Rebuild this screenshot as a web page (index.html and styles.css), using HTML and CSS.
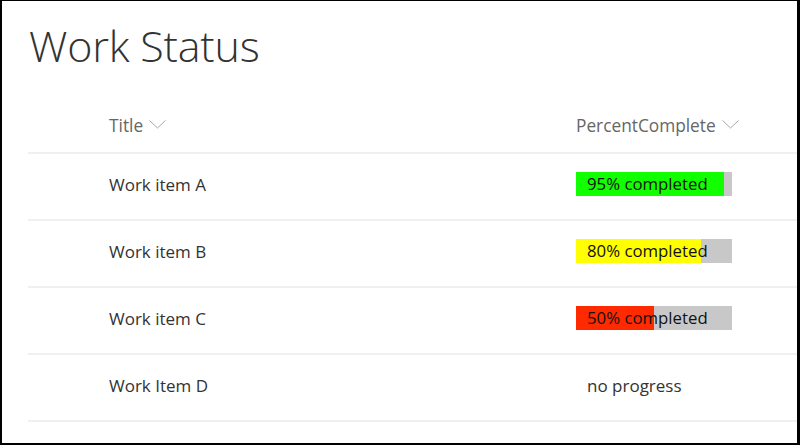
FILE: index.html
```html
<!DOCTYPE html>
<html lang="en">
<head>
  <meta charset="UTF-8">
  <title>Work Status</title>
  <link rel="stylesheet" href="styles.css">
</head>
<body>
  <div class="frame">
    <h1 class="page-title">Work Status</h1>

    <div class="list">
      <div class="row header">
        <div class="cell title-col">Title <svg class="chevron" width="17" height="9" viewBox="0 0 17 9"><polyline points="0.5,0.5 8.5,8 16.5,0.5" /></svg></div>
        <div class="cell pct-col">PercentComplete <svg class="chevron" width="17" height="9" viewBox="0 0 17 9"><polyline points="0.5,0.5 8.5,8 16.5,0.5" /></svg></div>
      </div>

      <div class="row">
        <div class="cell title-col">Work item A</div>
        <div class="cell pct-col">
          <div class="bar"><div class="fill green" style="width: 95%"></div><span>95% completed</span></div>
        </div>
      </div>

      <div class="row">
        <div class="cell title-col">Work item B</div>
        <div class="cell pct-col">
          <div class="bar"><div class="fill yellow" style="width: 80%"></div><span>80% completed</span></div>
        </div>
      </div>

      <div class="row">
        <div class="cell title-col">Work item C</div>
        <div class="cell pct-col">
          <div class="bar"><div class="fill red" style="width: 50%"></div><span>50% completed</span></div>
        </div>
      </div>

      <div class="row">
        <div class="cell title-col">Work Item D</div>
        <div class="cell pct-col"><span class="none">no progress</span></div>
      </div>
    </div>
  </div>
</body>
</html>
```

FILE: styles.css
```css
* {
  margin: 0;
  padding: 0;
  box-sizing: border-box;
}

body {
  background: #000;
  font-family: 'Open Sans', 'Noto Sans', sans-serif;
  color: #333;
}

.frame {
  width: 800px;
  height: 445px;
  background: #fff;
  border-style: solid;
  border-color: #000;
  border-width: 1px 3px 2px 2px;
  overflow: hidden;
}

.page-title {
  font-weight: 300;
  font-size: 43px;
  line-height: 58px;
  color: #333;
  padding: 16px 0 0 27px;
  height: 100px;
  letter-spacing: -0.2px;
}

.list {
  margin-left: 26px;
}

.row {
  display: flex;
  align-items: center;
  height: 67px;
  padding-bottom: 5px;
  border-bottom: 2px solid #f0f0f0;
  font-size: 17px;
  color: #333;
}

.row.header {
  height: 53px;
  align-items: flex-start;
  padding: 13px 0 0;
  font-size: 17.3px;
  color: #666;
}

.title-col {
  width: 548px;
  padding-left: 81px;
  display: flex;
  align-items: center;
}

.chevron {
  fill: none;
  stroke: #a6a6a6;
  stroke-width: 1;
  margin: 0 0 2px 6px;
}

.pct-col {
  display: flex;
  align-items: center;
}

.bar {
  position: relative;
  width: 156px;
  height: 24px;
  background: #c8c8c8;
}

.fill {
  height: 100%;
}

.green { background: #11ff00; }
.yellow { background: #ffff00; }
.red { background: #ff2a00; }

.bar span {
  position: absolute;
  left: 11px;
  top: 0;
  line-height: 24px;
  font-size: 16.8px;
  color: #111;
  white-space: nowrap;
}

.none {
  padding-left: 11px;
  font-size: 17px;
}
```
